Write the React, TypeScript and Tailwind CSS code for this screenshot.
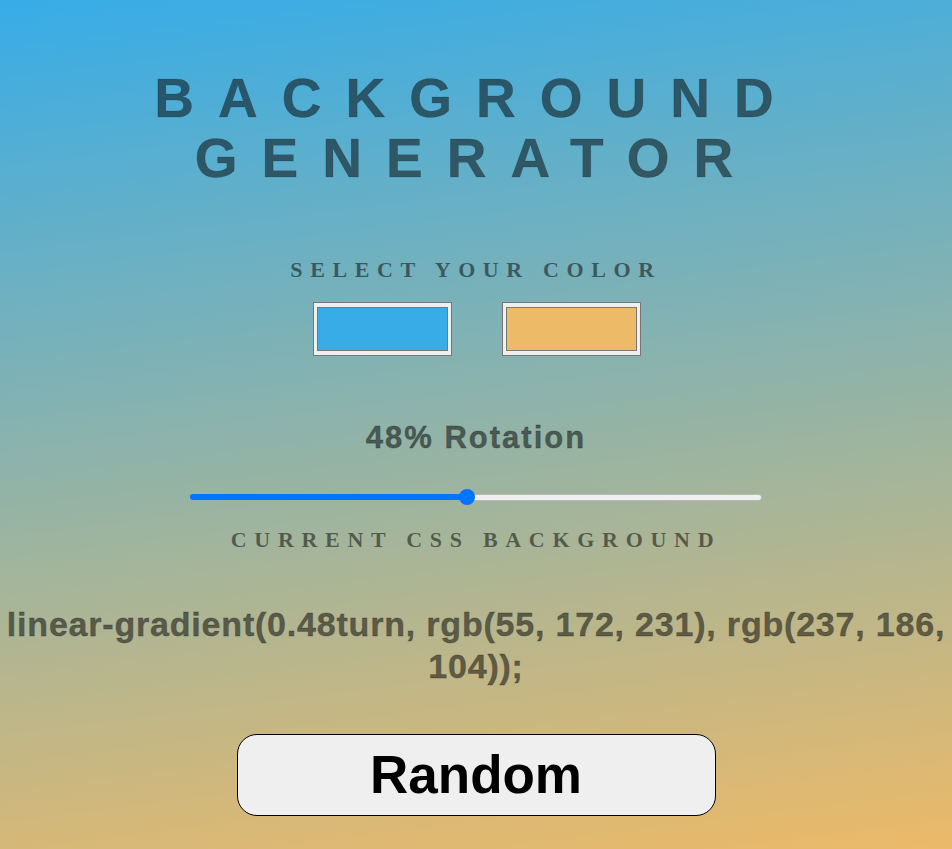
import React from 'react';

const sans = '"Liberation Sans", Arial, sans-serif';
const serif = '"Liberation Serif", "Times New Roman", serif';

const ColorBox = ({ color }: { color: string }) => {
  return (
    <div className="w-[139px] h-[54px] border border-[#767676] bg-[#efefef] px-[3px] py-[4px]">
      <div className="w-full h-full border border-[#777777]" style={{ backgroundColor: color }} />
    </div>
  );
};

const App = () => {
  const rotation = 48;

  return (
    <div
      className="min-h-screen w-full bg-[linear-gradient(0.48turn,rgb(55,172,231),rgb(237,186,104))] text-center text-[rgba(0,0,0,0.5)] flex flex-col items-center"
      style={{ fontFamily: sans }}
    >
      <h1 className="mt-[68px] text-[55px] leading-[60px] font-bold tracking-[24px] [-webkit-text-stroke:0.6px_rgba(0,0,0,0.25)]">
        <div>BACKGROUND</div>
        <div>GENERATOR</div>
      </h1>

      <h3
        className="mt-[69px] text-[22px] leading-[26px] font-bold tracking-[7.6px]"
        style={{ fontFamily: serif }}
      >
        SELECT YOUR COLOR
      </h3>

      <div className="mt-[19px] flex gap-[50px] pl-[2px]">
        <ColorBox color="#37ace7" />
        <ColorBox color="#edba68" />
      </div>

      <h2 className="mt-[64px] text-[31px] leading-[36px] font-bold tracking-[2px] [-webkit-text-stroke:0.8px_rgba(0,0,0,0.25)]">
        {rotation}% Rotation
      </h2>

      {/* slider */}
      <div className="mt-[33px] w-[60%] h-4 relative flex items-center">
        <div className="h-[6px] bg-[#0075ff] rounded-l-full" style={{ width: `${rotation}%` }} />
        <div className="flex-1 h-[7px] bg-[#efefef] border border-[#b8b8b8] rounded-r-full" />
        <div
          className="absolute top-0 w-4 h-4 rounded-full bg-[#0075ff] -ml-1.5"
          style={{ left: `${rotation}%` }}
        />
      </div>

      <h3
        className="mt-[22px] text-[22px] leading-[26px] font-bold tracking-[7.7px]"
        style={{ fontFamily: serif }}
      >
        CURRENT CSS BACKGROUND
      </h3>

      <p className="mt-[50px] w-full text-[34px] leading-[42px] font-bold tracking-[0.8px] [-webkit-text-stroke:0.8px_rgba(0,0,0,0.25)]">
        linear-gradient(0.48turn, rgb(55, 172, 231), rgb(237, 186, 104));
      </p>

      <button className="mt-[47px] mb-[40px] w-[479px] h-[82px] border border-black rounded-[20px] bg-[#efefef] text-black text-[53px] font-bold">
        Random
      </button>
    </div>
  );
};

export default App;
